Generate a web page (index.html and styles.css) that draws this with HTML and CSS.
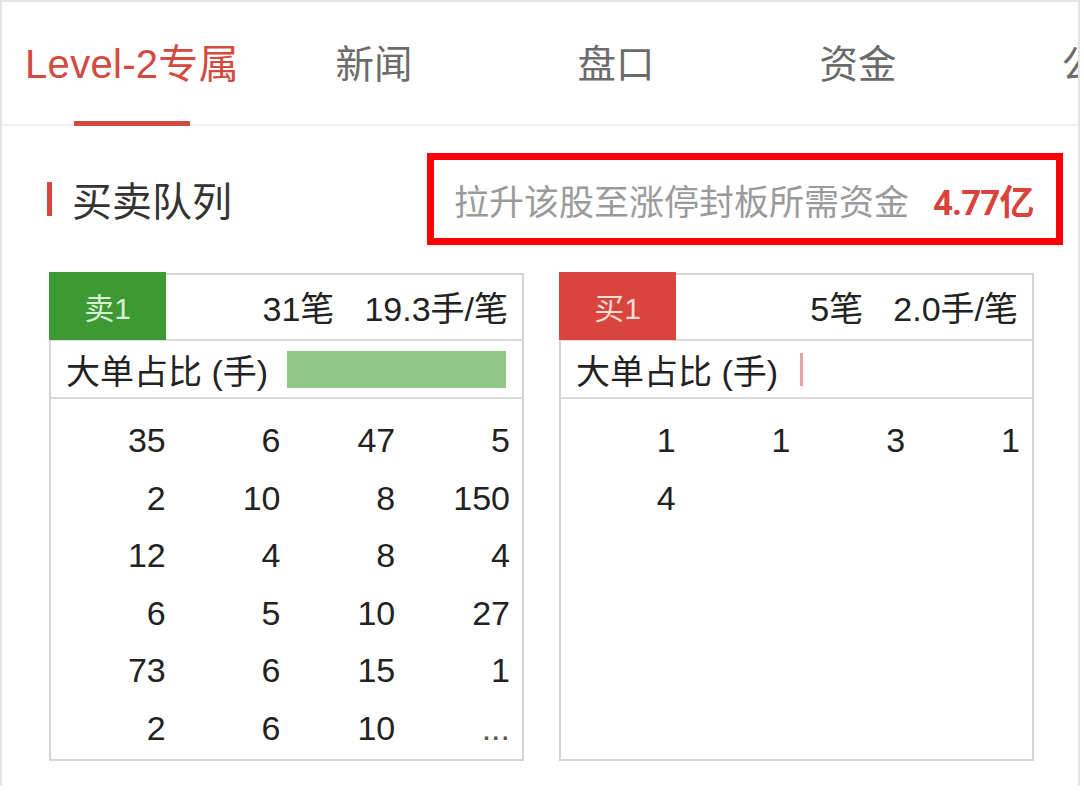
FILE: index.html
```html
<!DOCTYPE html>
<html lang="zh-CN">
<head>
    <meta charset="UTF-8">
    <meta name="viewport" content="width=device-width, initial-scale=1.0">
    <title>Level-2 买卖队列</title>
    <link rel="stylesheet" href="styles.css">
</head>
<body>
    <div class="page">
        <div class="tabs">
            <div class="tab active">Level-2专属</div>
            <div class="tab">新闻</div>
            <div class="tab">盘口</div>
            <div class="tab">资金</div>
            <div class="tab">公告</div>
        </div>

        <div class="section-head">
            <div class="section-title">买卖队列</div>
            <div class="limit-box">
                <span class="limit-label">拉升该股至涨停封板所需资金</span>
                <span class="limit-value">4.77亿</span>
            </div>
        </div>

        <div class="panels">
            <div class="panel">
                <div class="panel-head">
                    <div class="side sell">卖1</div>
                    <div class="summary">31笔<span class="gap"></span>19.3手/笔</div>
                </div>
                <div class="ratio-row">
                    <span class="ratio-label">大单占比 (手)</span>
                    <div class="ratio-bar sell-bar" style="width: 219px"></div>
                </div>
                <div class="orders">
                    <span>35</span><span>6</span><span>47</span><span>5</span>
                    <span>2</span><span>10</span><span>8</span><span>150</span>
                    <span>12</span><span>4</span><span>8</span><span>4</span>
                    <span>6</span><span>5</span><span>10</span><span>27</span>
                    <span>73</span><span>6</span><span>15</span><span>1</span>
                    <span>2</span><span>6</span><span>10</span><span class="more">...</span>
                </div>
            </div>

            <div class="panel">
                <div class="panel-head">
                    <div class="side buy">买1</div>
                    <div class="summary">5笔<span class="gap"></span>2.0手/笔</div>
                </div>
                <div class="ratio-row">
                    <span class="ratio-label">大单占比 (手)</span>
                    <div class="ratio-bar buy-bar" style="width: 3px"></div>
                </div>
                <div class="orders">
                    <span>1</span><span>1</span><span>3</span><span>1</span>
                    <span>4</span>
                </div>
            </div>
        </div>
    </div>
</body>
</html>
```

FILE: styles.css
```css
* {
    box-sizing: border-box;
}

body {
    margin: 0;
    background-color: #fff;
    font-family: "Liberation Sans", "Noto Sans CJK SC", sans-serif;
    color: #222;
}

.page {
    width: 1080px;
    height: 786px;
    border: 2px solid #e4e4e4;
    border-bottom: none;
    overflow: hidden;
}

/* tab bar */
.tabs {
    display: flex;
    height: 124px;
    padding-left: 9px;
    border-bottom: 2px solid #f0f0f0;
    white-space: nowrap;
}

.tab {
    flex: 0 0 242px;
    display: flex;
    justify-content: center;
    align-items: center;
    padding-bottom: 4px;
    font-size: 38.5px;
    color: #6b6b6b;
    position: relative;
}

.tab.active {
    color: #d24a40;
    font-size: 40px;
    letter-spacing: 0.3px;
}

.tab.active::after {
    content: "";
    position: absolute;
    left: 63px;
    bottom: -2px;
    width: 116px;
    height: 5px;
    background-color: #d24a40;
}

/* heading row */
.section-head {
    display: flex;
    align-items: center;
    padding: 27px 15px 28px 45px;
}

.section-title {
    display: flex;
    align-items: center;
    font-size: 40px;
    color: #333;
}

.section-title::before {
    content: "";
    width: 5px;
    height: 34px;
    margin-right: 20px;
    background-color: #d9483e;
}

.limit-box {
    margin-left: auto;
    width: 636px;
    height: 92px;
    border: 7px solid #ff0000;
    display: flex;
    align-items: center;
    padding-left: 20px;
}

.limit-label {
    font-size: 35px;
    color: #9a9a9a;
}

.limit-value {
    margin-left: 24px;
    font-family: "Roboto", "Noto Sans CJK SC", sans-serif;
    font-weight: bold;
    font-size: 35px;
    color: #d9433b;
    letter-spacing: -1px;
}

/* queue panels */
.panels {
    display: flex;
    gap: 35px;
    padding-left: 47px;
}

.panel {
    width: 475px;
    height: 488px;
    border: 2px solid #d4d4d4;
}

.panel-head {
    display: flex;
    align-items: center;
    height: 68px;
    border-bottom: 2px solid #dadada;
    margin-top: -2px;
    margin-left: -2px;
}

.side {
    width: 117px;
    height: 68px;
    display: flex;
    justify-content: center;
    align-items: center;
    font-size: 30px;
}

.side.sell {
    background-color: #3d9934;
    color: #d9efd3;
}

.side.buy {
    background-color: #d9443c;
    color: #f8dcd8;
}

.summary {
    margin-left: auto;
    padding-right: 14px;
    font-size: 34px;
    color: #222;
    display: flex;
    align-items: center;
}

.summary .gap {
    width: 30px;
}

.ratio-row {
    display: flex;
    align-items: center;
    height: 58px;
    padding-left: 15px;
    border-bottom: 2px solid #dadada;
}

.ratio-label {
    font-size: 34px;
    color: #222;
}

.ratio-bar {
    height: 37px;
    margin-left: 19px;
}

.sell-bar {
    background-color: #8fc985;
}

.buy-bar {
    height: 33px;
    margin-left: 22px;
    background-color: #e9a3a3;
}

.orders {
    display: grid;
    grid-template-columns: repeat(4, 1fr);
    grid-auto-rows: 57.5px;
    padding: 13px 12px 0 0;
}

.orders span {
    display: flex;
    align-items: center;
    justify-content: flex-end;
    font-size: 34px;
    color: #222;
}

.orders .more {
    color: #555;
}
```
